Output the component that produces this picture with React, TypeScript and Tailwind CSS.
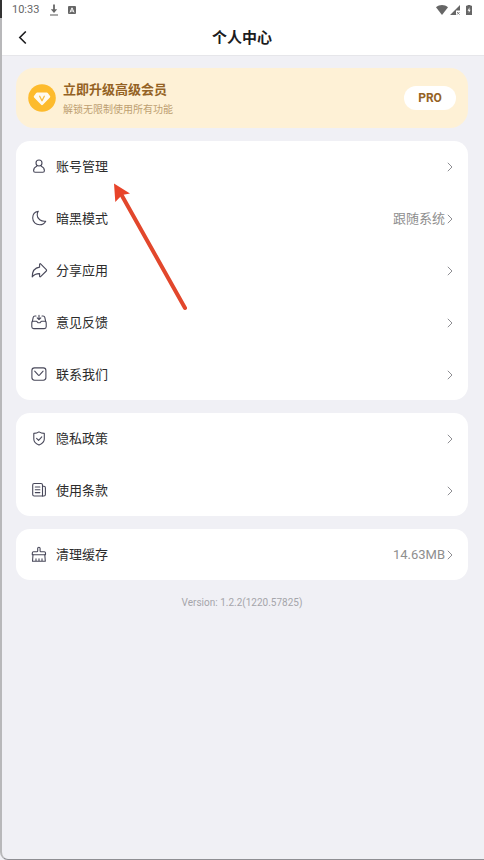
import React from 'react'

interface MenuItem {
  label: string
  icon: React.ReactNode
  value?: string
}

function LineIcon({ children }: { children: React.ReactNode }) {
  return (
    <svg
      viewBox="0 0 18 18"
      className="w-[18px] h-[18px] shrink-0 text-[#48485a]"
      fill="none"
      stroke="currentColor"
      strokeWidth="1.1"
      strokeLinecap="round"
      strokeLinejoin="round"
      aria-hidden="true"
    >
      {children}
    </svg>
  )
}

function Chevron() {
  return (
    <svg viewBox="0 0 6 10" className="w-[6px] h-[10px] shrink-0" fill="none" stroke="#8e8e93" strokeWidth="1" aria-hidden="true">
      <path d="M0.8 0.8 5 5 0.8 9.2" />
    </svg>
  )
}

const groups: MenuItem[][] = [
  [
    {
      label: '账号管理',
      icon: (
        <LineIcon>
          <circle cx="9" cy="5" r="3" />
          <path d="M6.700 8.300C4.500 9.300 3.600 10.800 3.600 12.700c0 1 .6 1.500 1.500 1.500h7.800c.9 0 1.500-.5 1.500-1.500 0-1.900-.9-3.400-3.100-4.400" />
        </LineIcon>
      ),
    },
    {
      label: '暗黑模式',
      value: '跟随系统',
      icon: (
        <LineIcon>
          <path d="M8.300 1.300C5 1.900 2.700 4.600 2.700 7.900c0 3.900 3.100 6.900 6.900 6.900 2.600 0 4.900-1.400 6.100-3.600-4.500.6-8.500-2.300-8.500-6.300 0-1.300.3-2.500 1.100-3.600Z" />
        </LineIcon>
      ),
    },
    {
      label: '分享应用',
      icon: (
        <LineIcon>
          <path d="M9.600 2.300c0-.7.6-.9 1-.5l5.700 5.900c.4.400.4.900 0 1.300l-5.700 5.700c-.4.400-1 .2-1-.5v-2.600c-3.600-.1-5.500.7-7.400 3.300C2.200 9.700 4.800 5.700 9.600 5.100Z" />
        </LineIcon>
      ),
    },
    {
      label: '意见反馈',
      icon: (
        <LineIcon>
          <path d="M6 2H5c-1 0-1.600.5-1.800 1.400L2.300 7.600M12 2h1c1 0 1.600.5 1.800 1.400l.9 4.200" />
          <path d="M3.300 7.200h3c.5 0 .8.300 1 .7.300.6.900.9 1.700.9s1.400-.3 1.700-.9c.2-.4.500-.7 1-.7h3c1 0 1.500.6 1.500 1.600v3.900c0 1.200-.7 1.900-1.900 1.900H3.700c-1.200 0-1.900-.7-1.900-1.900V8.800c0-1 .5-1.600 1.500-1.600Z" />
          <path d="M9 1.200v4.400M7.200 3.900 9 5.700l1.800-1.800" />
        </LineIcon>
      ),
    },
    {
      label: '联系我们',
      icon: (
        <LineIcon>
          <rect x="1.900" y="1.900" width="14" height="12.300" rx="2.600" />
          <path d="m4.700 5.200 3.400 3.700c.5.500 1.100.5 1.600 0l3.400-3.700" />
        </LineIcon>
      ),
    },
  ],
  [
    {
      label: '隐私政策',
      icon: (
        <LineIcon>
          <path d="M9 1.900c-1.500 1.100-3.200 1.500-5.200 1.500v5.700c0 3 2 4.700 5.200 6 3.200-1.300 5.300-3 5.300-6V3.400c-2 0-3.700-.4-5.300-1.500Z" />
          <path d="m6.600 8.300 2 2 3.200-3.500" />
        </LineIcon>
      ),
    },
    {
      label: '使用条款',
      icon: (
        <LineIcon>
          <path d="M12.500 14H4.200c-.9 0-1.500-.6-1.500-1.500V3c0-.9.600-1.500 1.500-1.500H11c.9 0 1.500.6 1.500 1.500v11Z" />
          <path d="M12.500 4.300h1.400c.9 0 1.500.6 1.500 1.500v6.700c0 .9-.6 1.500-1.500 1.500h-1.400M5.300 5h4.600M5.300 7.800h4.600M5.300 10.600h4.600" />
        </LineIcon>
      ),
    },
  ],
  [
    {
      label: '清理缓存',
      icon: (
        <LineIcon>
          <path d="M7.700 5V2.400c0-.7.500-1.200 1.200-1.200s1.200.5 1.200 1.200V5c0 .5.300.8.800.8h3.400c.7 0 1.200.5 1.200 1.200v1.700H2.300V7c0-.7.500-1.200 1.200-1.200h3.400c.5 0 .8-.3.800-.8Z" />
          <path d="M3 8.700 2.500 15.200h12.800l-.5-6.500M6 15.200v-2.500M9 15.200v-2.500M12 15.200v-2.500" />
        </LineIcon>
      ),
      value: '14.63MB',
    },
  ],
]

function StatusBar() {
  return (
    <div className="flex h-5 items-center justify-between pl-3 pr-3 text-[#666]">
      <div className="flex items-center">
        <span className="text-[11px] leading-4">10:33</span>
        <svg viewBox="0 0 10 12" className="ml-[10px] w-[10px] h-3" fill="none" stroke="currentColor" strokeWidth="1.100" aria-hidden="true">
          <path d="M5 .5v6" strokeWidth="1.800" />
          <path d="M1.800 5.300h6.400L5 9Z" fill="currentColor" stroke="none" />
          <path d="M1 11h8" />
        </svg>
        <svg viewBox="0 0 8 8" className="ml-[9px] w-2 h-2" aria-hidden="true">
          <rect width="8" height="8" rx="1" fill="currentColor" />
          <path d="M2 6.400 4 1.800l2 4.600M2.800 5h2.400" fill="none" stroke="#fff" strokeWidth="1" />
        </svg>
      </div>
      <div className="flex items-center">
        <svg viewBox="0 0 12 10" className="w-3 h-[10px]" fill="currentColor" aria-hidden="true">
          <path d="M0 2.200C3.500-.6 8.500-.6 12 2.200L6 10Z" />
        </svg>
        <svg viewBox="0 0 10 10" className="ml-[2px] w-[10px] h-[10px]" aria-hidden="true">
          <path d="M10 0v5.500H6V10H0Z" fill="currentColor" />
          <path d="m7 7 2.600 2.600M9.600 7 7 9.600" stroke="currentColor" strokeWidth=".8" />
        </svg>
        <svg viewBox="0 0 6 10" className="ml-[6px] w-[6px] h-[10px]" aria-hidden="true">
          <path d="M1.500 0h3v.8H6V10H0V.8h1.500Z" fill="currentColor" />
          <path d="M3.500 2.300 1.600 5.700h1.200v2.400l1.800-3.300H3.400Z" fill="#fff" />
        </svg>
      </div>
    </div>
  )
}

function ProBanner() {
  return (
    <section className="flex h-[60px] items-center rounded-[18px] bg-[#fef1d6] px-3">
      <svg viewBox="0 0 28 28" className="w-7 h-7 shrink-0" aria-hidden="true">
        <circle cx="14" cy="14" r="13.800" fill="#fdbb2d" />
        <path d="M9.300 8.500h9.400c.5 0 .8.200 1.100.5l2.200 2.900c.4.600.4 1.100-.1 1.600l-6.800 7.100c-.7.700-1.500.7-2.200 0l-6.800-7.100c-.5-.5-.5-1-.1-1.600L8.200 9c.3-.3.6-.5 1.100-.5Z" fill="#fffaf0" />
        <path d="m11.700 12.300 2.300 4.400 2.300-4.400" fill="none" stroke="#f7bd42" strokeWidth="1.300" strokeLinecap="round" strokeLinejoin="round" />
      </svg>
      <div className="ml-[7px] min-w-0 flex-1 pt-1">
        <h2 className="text-[13px] leading-5 font-bold text-[#946224]">立即升级高级会员</h2>
        <p className="text-[10px] leading-5 text-[#bd9f71]">解锁无限制使用所有功能</p>
      </div>
      <button className="h-6 w-[52px] rounded-full bg-white text-xs font-bold text-[#946224]">PRO</button>
    </section>
  )
}

function MenuRow({ item }: { item: MenuItem }) {
  return (
    <li>
      <button className="flex h-[51px] w-full items-center pl-[14px] pr-[15px] text-left">
        {item.icon}
        <span className="ml-2 flex-1 text-[13px] text-[#2c2c2c]">{item.label}</span>
        {item.value && <span className="mr-[2px] text-[13px] text-[#8e8e8e]">{item.value}</span>}
        <Chevron />
      </button>
    </li>
  )
}

export default function App() {
  return (
    <div className="relative min-h-screen overflow-hidden bg-[#f0f0f5] font-[Roboto,'Noto_Sans_CJK_SC',sans-serif]">
      <header className="border-b border-[#e6e6ea] bg-white">
        <StatusBar />
        <div className="grid h-[35px] grid-cols-[1fr_auto_1fr] items-center px-4">
          <button aria-label="返回" className="flex h-8 w-6 items-center">
            <svg viewBox="0 0 14 14" className="w-[14px] h-[14px]" fill="none" stroke="#1c1c1e" strokeWidth="1.600" aria-hidden="true">
              <path d="M9.800.5 3.800 6.500l6 6" />
            </svg>
          </button>
          <h1 className="pt-[2px] text-[15px] font-bold text-[#1c1c1e]">个人中心</h1>
        </div>
      </header>

      <main className="flex flex-col gap-[13px] px-4 pt-3">
        <ProBanner />
        {groups.map((items, i) => (
          <ul key={i} className="flex flex-col gap-px rounded-[14px] bg-white">
            {items.map(item => <MenuRow key={item.label} item={item} />)}
          </ul>
        ))}
        <p className="text-center text-[10px] leading-5 text-[#a5a5aa]">Version: 1.2.2(1220.57825)</p>
      </main>

      {/* Pointer to the account row */}
      <svg viewBox="0 0 74 128" className="pointer-events-none absolute left-[113px] top-[183px] w-[74px] h-32" aria-hidden="true">
        <path d="M8 11 72 125" stroke="#e2472c" strokeWidth="4" strokeLinecap="round" />
        <path d="M1 0.500 17 10.500 9 12 2.300 19Z" fill="#e8442a" />
      </svg>

      {/* Window edge */}
      <div className="pointer-events-none absolute inset-0 rounded-bl-[8px] border-b border-l-2 border-b-[#8e8e93] border-l-[#b8b8ba]" />
      <div className="pointer-events-none absolute left-0 top-0 h-[18px] w-[2px] bg-[#333]" />
    </div>
  )
}
